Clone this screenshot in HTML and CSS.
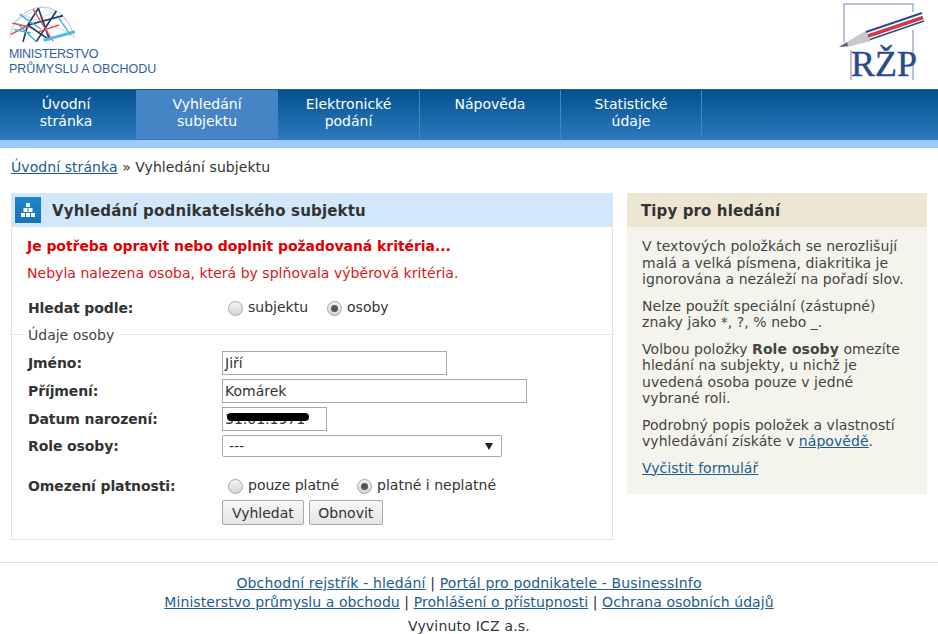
FILE: index.html
```html
<!DOCTYPE html>
<html lang="cs">
<head>
<meta charset="utf-8">
<title>Vyhledání subjektu</title>
<link rel="stylesheet" href="styles.css">
</head>
<body>
<header class="top">
  <div class="mpo">
    <svg class="mpo-globe" width="70" height="38" viewBox="30 15 210 114" fill="none">
      <path d="M32 110C38 55 85 22 130 18c50 2 85 40 95 92" stroke="#9aa6b8" stroke-width="2"/>
      <path d="M48 60L130 18M130 18L205 60M60 38L225 100M32 100L170 28" stroke="#aab4c4" stroke-width="1.5"/>
      <path d="M118 22L86 72 72 122M86 72L150 116M118 22L152 118M172 30L112 122M88 72L192 44" stroke="#1f3a68" stroke-width="5"/>
      <path d="M102 24L162 120M36 100L86 74M40 66L90 78M120 92L180 72" stroke="#d8504a" stroke-width="4"/>
      <path d="M56 68L112 122M62 40L126 84M180 52L216 104M44 86L96 96" stroke="#45add6" stroke-width="4"/>
      <path d="M134 118L228 92" stroke="#4fb9e2" stroke-width="9"/>
    </svg>
    <div class="mpo-text"><span class="mpo-first">MINISTERSTVO</span><br>PRŮMYSLU A OBCHODU</div>
  </div>
  <div class="rzp">
    <svg class="rzp-pencil" width="102" height="89" viewBox="836 0 102 89" fill="none">
      <path d="M844 42V4H913V12M851 50V80M913 30V80" stroke="#a4aec8" stroke-width="1.5"/>
      <path d="M839 47L862 33 866 31 871 41 847 47Z" fill="#c4c7cd"/>
      <path d="M839 47L847 42 848 46Z" fill="#56637c"/>
      <path d="M866 32L922 13" stroke="#2a4a90" stroke-width="2"/>
      <path d="M868 36L923 17.5" stroke="#cf3b46" stroke-width="3.5"/>
      <path d="M870 39.5L924 21" stroke="#2a4a90" stroke-width="1.5"/>
    </svg>
    <div class="rzp-text">RŽP</div>
  </div>
</header>
<nav class="nav">
  <a class="nav-item first" href="#">Úvodní<br>stránka</a>
  <a class="nav-item active" href="#">Vyhledání<br>subjektu</a>
  <a class="nav-item" href="#">Elektronické<br>podání</a>
  <a class="nav-item w141" href="#">Nápověda</a>
  <a class="nav-item w141" href="#">Statistické<br>údaje</a>
</nav>
<div class="band"></div>
<div class="crumbs"><a href="#">Úvodní stránka</a> » Vyhledání subjektu</div>
<main class="columns">
  <section class="panel">
    <h1 class="panel-head">
      <span class="panel-icon">
        <svg width="16" height="14" viewBox="0 0 16 14" fill="#fff"><rect x="6" y="0" width="4" height="4"/><rect x="3.5" y="5" width="4" height="4"/><rect x="8.5" y="5" width="4" height="4"/><rect x="1" y="10" width="4" height="4"/><rect x="6" y="10" width="4" height="4"/><rect x="11" y="10" width="4" height="4"/></svg>
      </span>
      <span class="panel-title">Vyhledání podnikatelského subjektu</span>
    </h1>
    <div class="err-title">Je potřeba opravit nebo doplnit požadovaná kritéria...</div>
    <div class="err-text">Nebyla nalezena osoba, která by splňovala výběrová kritéria.</div>
    <div class="row search-by">
      <span class="label">Hledat podle:</span>
      <span class="radios"><span class="radio"></span>subjektu<span class="radio on second"></span>osoby</span>
    </div>
    <fieldset class="fs">
      <legend>Údaje osoby</legend>
      <div class="row field"><span class="label">Jméno:</span><span class="input w225">Jiří</span></div>
      <div class="row field"><span class="label">Příjmení:</span><span class="input w305">Komárek</span></div>
      <div class="row field"><span class="label">Datum narození:</span><span class="input w105">31.01.1971<span class="scribble"></span></span></div>
      <div class="row field short"><span class="label">Role osoby:</span><span class="input w280">---<span class="arrow"></span></span></div>
      <div class="row validity">
        <span class="label">Omezení platnosti:</span>
        <span class="radios"><span class="radio"></span>pouze platné<span class="radio on third"></span>platné i neplatné</span>
      </div>
      <div class="buttons"><button class="btn" type="button">Vyhledat</button><button class="btn tight" type="button">Obnovit</button></div>
    </fieldset>
  </section>
  <aside class="tips">
    <h2 class="tips-head">Tipy pro hledání</h2>
    <div class="tips-body">
      <p>V textových položkách se nerozlišují malá a velká písmena, diakritika je ignorována a nezáleží na pořadí slov.</p>
      <p>Nelze použít speciální (zástupné) znaky jako *, ?, % nebo _.</p>
      <p>Volbou položky <b>Role osoby</b> omezíte hledání na subjekty, u nichž je uvedená osoba pouze v jedné vybrané roli.</p>
      <p>Podrobný popis položek a vlastností vyhledávání získáte v <a href="#">nápovědě</a>.</p>
      <p class="last"><a href="#">Vyčistit formulář</a></p>
    </div>
  </aside>
</main>
<footer class="foot">
  <div><a href="#">Obchodní rejstřík - hledání</a> | <a href="#">Portál pro podnikatele - BusinessInfo</a></div>
  <div class="foot-two"><a href="#">Ministerstvo průmyslu a obchodu</a> | <a href="#">Prohlášení o přístupnosti</a> | <a href="#">Ochrana osobních údajů</a></div>
  <div class="made">Vyvinuto ICZ a.s.</div>
</footer>
</body>
</html>
```
FILE: styles.css
```css
* { box-sizing: border-box; }
html, body { margin: 0; padding: 0; }
body { width: 938px; height: 634px; overflow: hidden; background: #fff; color: #333; font: 14px/16px "DejaVu Sans", Verdana, sans-serif; }
a { color: #205c90; }
.top { height: 89px; display: flex; justify-content: space-between; }
.mpo { padding: 6px 0 0 9px; }
.mpo-globe { display: block; }
.mpo-text { margin-top: 3px; font: 12.5px/15px "Liberation Sans", sans-serif; color: #2f5f9f; }
.mpo-first { letter-spacing: -.4px; }
.rzp { width: 102px; position: relative; }
.rzp-pencil { position: absolute; left: 0; top: 0; }
.rzp-text { position: absolute; left: 15px; top: 45px; font: 36px/38px "Liberation Serif", serif; color: #274a8c; -webkit-text-stroke: .4px #274a8c; }
.nav { height: 51px; display: flex; background: linear-gradient(#04508f, #2a7bbd); border-top: 1px solid #1a5f96; border-bottom: 1px solid #3a79ae; }
.nav-item { width: 142px; padding-top: 6px; text-align: center; color: #fff; text-decoration: none; border-right: 1px solid #4a86ba; line-height: 17px; }
.first { width: 136px; border-right: 0; padding-right: 4px; }
.w141 { width: 141px; }
.active { background: #4685c5; border-right: 0; }
.band { height: 8px; background: #9bcaf9; }
.crumbs { padding: 11px 0 0 11px; height: 45px; letter-spacing: .07px; }
.columns { display: flex; gap: 14px; padding-left: 11px; }
.panel { width: 602px; height: 347px; border: 1px solid #d8e6f2; border-top: 0; }
.panel-head { margin: 0 -1px; height: 34px; display: flex; align-items: center; gap: 11px; padding-left: 4px; background: #d3e7fb; font-size: 15px; font-weight: bold; color: #333; }
.panel-title { margin-top: 2px; letter-spacing: .18px; }
.panel-icon { width: 26px; height: 26px; display: flex; align-items: center; justify-content: center; background: linear-gradient(#1f86cf, #1572b8); }
.err-title { margin: 11px 0 0 15px; font-weight: bold; color: #e00000; letter-spacing: -.06px; }
.err-text { margin: 11px 0 0 15px; color: #d81818; letter-spacing: .03px; }
.row { display: flex; align-items: center; }
.label { width: 194px; font-weight: bold; flex: none; letter-spacing: -.1px; }
.search-by { margin: 18px 0 0 16px; height: 18px; }
.radios { display: flex; align-items: center; margin-top: -2px; }
.radio { width: 15px; height: 15px; margin: 3px 5px 0 6px; border-radius: 50%; border: 1px solid #a5a5a5; background: linear-gradient(#f2f2f2, #d6d6d6); position: relative; }
.radio.second { margin-left: 19px; }
.radio.third { margin-left: 18px; }
.on::after { content: ""; position: absolute; left: 3px; top: 3px; width: 7px; height: 7px; border-radius: 50%; background: #555; }
.fs { margin: 8px 0 0; padding: 0 0 0 16px; border: 0; border-top: 1px solid #d8e6f2; min-width: 0; }
.fs legend { margin-left: -4px; padding: 2px 4px 0; color: #444; }
.field { height: 28px; }
.field:first-of-type { margin-top: 6px; }
.short { height: 26px; }
.input { display: block; height: 24px; border: 1px solid #a9a9a9; background: #fff; padding: 3px 2px 0; position: relative; white-space: nowrap; }
.w225 { width: 225px; }
.w305 { width: 305px; }
.w105 { width: 105px; }
.w280 { width: 280px; height: 22px; border-radius: 2px; padding: 2px 6px; }
.scribble { position: absolute; left: 4px; top: 5px; width: 82px; height: 8px; border-radius: 4px; background: #000; }
.arrow { position: absolute; right: 8px; top: 7px; width: 0; height: 0; border-left: 4px solid transparent; border-right: 4px solid transparent; border-top: 7px solid #222; }
.validity { margin-top: 17px; height: 20px; }
.buttons { margin: 4px 0 0 194px; display: flex; gap: 5px; }
.btn { height: 25px; padding: 0 9px; font: 14px "DejaVu Sans", Verdana, sans-serif; color: #333; border: 1px solid #a9a9a9; border-radius: 2px; background: linear-gradient(#f7f7f7, #e4e4e4); }
.tight { padding: 0 8.5px; }
.tips { width: 300px; height: 301px; background: #f5f4ec; }
.tips-head { margin: 0; height: 34px; padding: 10px 0 0 14px; background: #ece6d2; font-size: 15px; line-height: 17px; font-weight: bold; color: #333; letter-spacing: .12px; }
.tips-body { padding: 11px 20px 0 15px; line-height: 16.5px; color: #444; letter-spacing: .05px; }
.tips-body p { margin: 0 0 10px; }
.foot { margin-top: 22px; padding-top: 11px; border-top: 1px solid #ddd; text-align: center; line-height: 19px; letter-spacing: .15px; }
.foot-two { letter-spacing: .07px; }
.made { margin-top: 5px; letter-spacing: .2px; }
```
